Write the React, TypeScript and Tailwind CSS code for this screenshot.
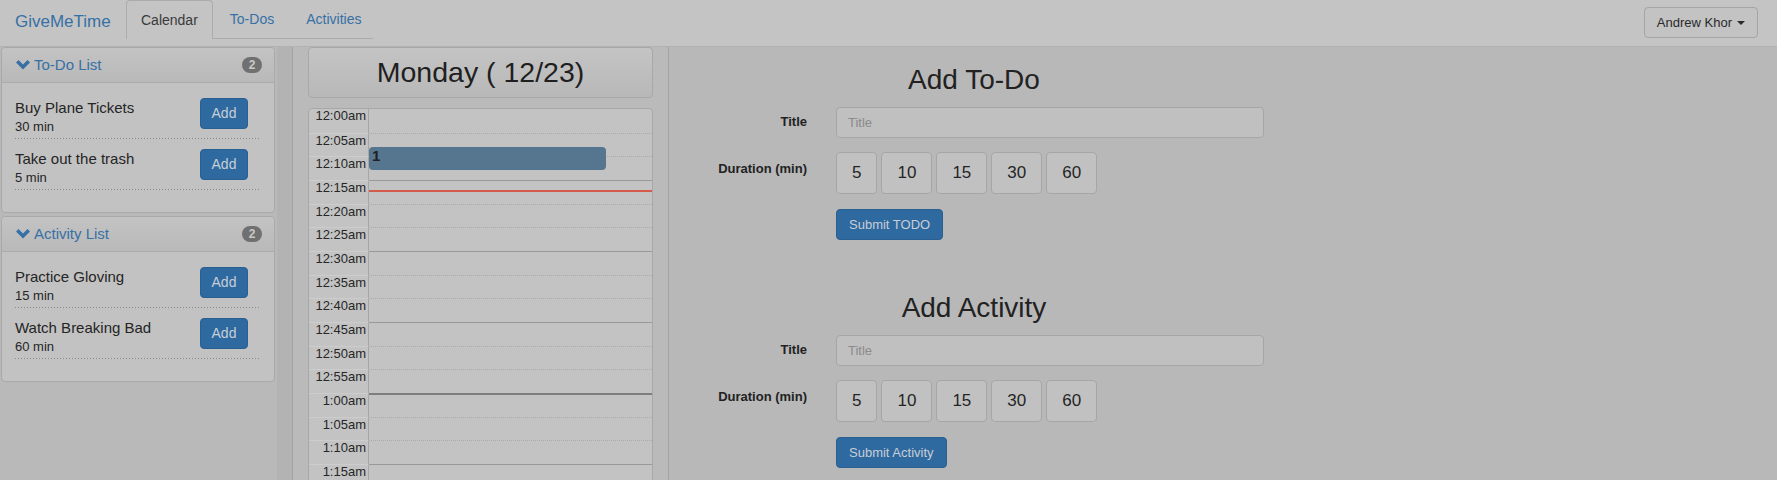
import React from "react";

const todos = [
  { title: "Buy Plane Tickets", mins: 30 },
  { title: "Take out the trash", mins: 5 },
];

const activities = [
  { title: "Practice Gloving", mins: 15 },
  { title: "Watch Breaking Bad", mins: 60 },
];

const durations = [5, 10, 15, 30, 60];

function slotLabel(k: number) {
  const total = k * 5;
  const h = Math.floor(total / 60);
  const m = total % 60;
  return `${h === 0 ? 12 : h}:${m.toString().padStart(2, "0")}am`;
}

const slots = Array.from({ length: 19 }, (_, k) => k);

function Chevron() {
  return (
    <svg width="14" height="10" viewBox="0 0 14 10" className="shrink-0">
      <path d="M0 2.6 L2.5 0.1 L7 4.6 L11.5 0.1 L14 2.6 L7 9.6 Z" fill="#3770a5" />
    </svg>
  );
}

function ListPanel({ title, items }: { title: string; items: { title: string; mins: number }[] }) {
  return (
    <div className="w-[274px] rounded-[4px] border border-[#a9a9a9] bg-[#c2c2c2]">
      <div className="flex h-[35px] items-center justify-between rounded-t-[4px] border-b border-[#acacac] bg-[linear-gradient(to_bottom,#c3c3c3,#b9b9b9)] pl-[14px] pr-[12px]">
        <div className="flex items-center gap-[4px] text-[15px] text-[#3770a5]">
          <Chevron />
          <span>{title}</span>
        </div>
        <span className="flex h-[16px] w-[20px] items-center justify-center rounded-full bg-[#707070] text-[12px] font-bold leading-none text-[#c8c8c8]">
          {items.length}
        </span>
      </div>
      <div className="flex flex-col gap-[10px] px-[13px] pb-[22px] pt-[15px]">
        {items.map((it) => (
          <div key={it.title}>
            <div className="flex items-start justify-between pb-[3px]">
              <div className="text-[#252525]">
                <div className="text-[15px] leading-[20px]">{it.title}</div>
                <div className="text-[13px] leading-[17px]">{it.mins} min</div>
              </div>
              <button className="mr-[13px] h-[31px] w-[48px] rounded-[4px] border border-[#2a5f91] bg-[#2e69a0] text-[14px] text-[#c8ced6]">
                Add
              </button>
            </div>
            <div className="h-px bg-[linear-gradient(to_right,#888888_1px,transparent_1px)] bg-[length:3px_1px]" />
          </div>
        ))}
      </div>
    </div>
  );
}

function Calendar() {
  return (
    <div className="relative mt-[10px] rounded-t-[4px] border border-[#a8a8a8] bg-[#c3c3c3]">
      {slots.map((k) => {
        const eventLine =
          k === 0
            ? "border-t-0"
            : k % 12 === 0
            ? "border-t-2 border-solid border-[#7d7d7d]"
            : k % 3 === 0
            ? "border-t border-solid border-[#999999]"
            : "border-t border-dotted border-[#aaaaaa]";
        return (
          <div key={k} className="flex h-[23.67px]">
            <div
              className={`w-[60px] shrink-0 border-r border-[#a6a6a6] pr-[2px] text-right text-[13px] leading-[14px] text-[#262626] ${
                k === 0 ? "" : "border-t border-t-[#cdcdcd]"
              }`}
            >
              {slotLabel(k)}
            </div>
            <div className={`flex-1 ${eventLine}`} />
          </div>
        );
      })}
      <div className="absolute left-[60px] top-[38px] h-[23px] w-[237px] rounded-[4px] bg-[#567690] px-[3px] text-[15px] font-bold leading-[18px] text-[#1f1f1f]">
        1
      </div>
      <div className="absolute left-[60px] right-0 top-[81px] h-[2px] bg-[#d45a4c]" />
    </div>
  );
}

function AddForm({ heading, submit }: { heading: string; submit: string }) {
  return (
    <div className="w-[580px]">
      <h2 className="text-center text-[28px] leading-[32px] text-[#222222]">{heading}</h2>
      <div className="mt-[11px] flex items-start">
        <label className="w-[123px] pt-[7px] text-right text-[13px] font-bold leading-[16px] text-[#222222]">Title</label>
        <input
          placeholder="Title"
          className="ml-[29px] h-[31px] w-[428px] rounded-[4px] border border-[#a6a6a6] bg-[#c0c0c0] px-[11px] text-[13px] text-[#333] outline-none placeholder:text-[#8b8b8b]"
        />
      </div>
      <div className="mt-[14px] flex items-start">
        <label className="w-[123px] pt-[9px] text-right text-[13px] font-bold leading-[16px] text-[#222222]">
          Duration (min)
        </label>
        <div className="ml-[29px] flex gap-[4px]">
          {durations.map((d) => (
            <button
              key={d}
              className="h-[42px] rounded-[4px] border border-[#a6a6a6] bg-[#c1c1c1] px-[15px] text-[17px] text-[#252525]"
            >
              {d}
            </button>
          ))}
        </div>
      </div>
      <div className="ml-[152px] mt-[15px]">
        <button className="h-[31px] rounded-[4px] border border-[#2a5f91] bg-[#2e69a0] px-[12px] text-[13px] text-[#c8ced6]">
          {submit}
        </button>
      </div>
    </div>
  );
}

export default function App() {
  return (
    <div className="h-[480px] w-[1777px] overflow-hidden bg-[#b9b9b9] font-['Liberation_Sans',Arial,sans-serif]">
      {/* navbar */}
      <div className="flex h-[47px] items-start border-b border-[#b2b2b2] bg-[#c4c4c4]">
        <div className="w-[126px] shrink-0 pl-[15px] text-[17px] leading-[44px] text-[#3770a5]">GiveMeTime</div>
        <ul className="flex h-[39px] w-[247px] shrink-0 whitespace-nowrap border-b border-[#ababab] text-[14px]">
          <li className="-mb-px mr-[2px] flex h-[39px] shrink-0 items-center rounded-t-[4px] border border-b-0 border-[#ababab] bg-[#c4c4c4] px-[14px] text-[#3a3a3a]">
            Calendar
          </li>
          <li className="mr-[2px] flex h-[38px] shrink-0 items-center px-[15px] text-[#3770a5]">To-Dos</li>
          <li className="flex h-[38px] shrink-0 items-center px-[15px] text-[#3770a5]">Activities</li>
        </ul>
        <button className="ml-auto mr-[19px] mt-[7px] flex h-[31px] items-center rounded-[4px] border border-[#a5a5a5] bg-[#c3c3c3] px-[12px] text-[13px] text-[#2a2a2a]">
          Andrew Khor
          <span className="ml-[5px] inline-block h-0 w-0 border-x-[4px] border-t-[4px] border-x-transparent border-t-[#2a2a2a]" />
        </button>
      </div>

      <div className="flex h-[433px]">
        {/* left lists */}
        <div className="flex w-[277px] shrink-0 flex-col gap-[3px] pl-[1px]">
          <ListPanel title="To-Do List" items={todos} />
          <ListPanel title="Activity List" items={activities} />
        </div>
        <div className="w-[15px] shrink-0 bg-[#b3b3b3]" />

        {/* day column */}
        <div className="w-[377px] shrink-0 border-x border-[#a3a3a3] bg-[#bababa] px-[15px]">
          <div className="flex h-[51px] items-center justify-center rounded-[4px] border border-[#a8a8a8] bg-[linear-gradient(to_bottom,#c4c4c4,#b8b8b8)] text-[28.5px] text-[#1f1f1f]">
            Monday ( 12/23)
          </div>
          <Calendar />
        </div>

        {/* forms */}
        <div className="flex flex-1 flex-col gap-[52px] bg-[#b8b8b8] pl-[15px] pt-[17px]">
          <AddForm heading="Add To-Do" submit="Submit TODO" />
          <AddForm heading="Add Activity" submit="Submit Activity" />
        </div>
      </div>
    </div>
  );
}
